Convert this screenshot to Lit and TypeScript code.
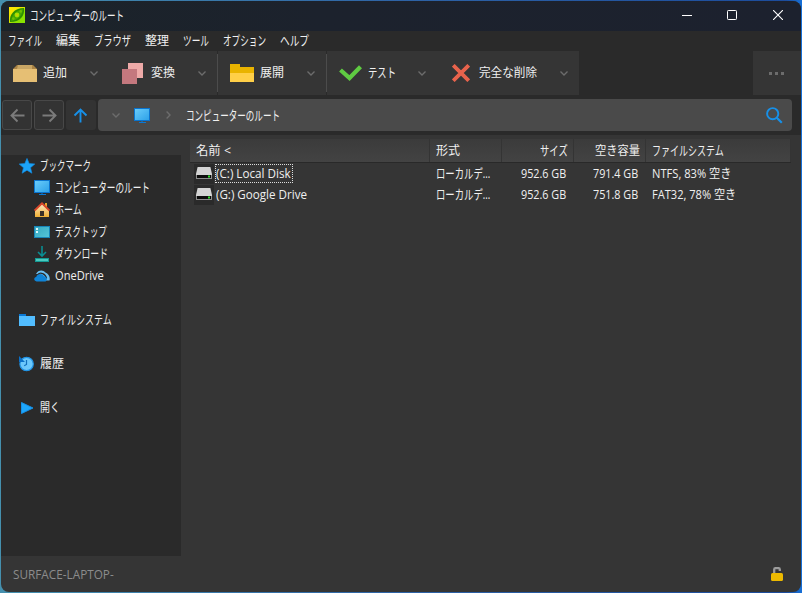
import { LitElement, html, svg, css, nothing } from "lit";
import { customElement, property } from "lit/decorators.js";

/** A label whose glyphs are condensed or widened to occupy exactly `w` pixels. */
@customElement("fit-text")
class FitText extends LitElement {
  static styles = css`
    :host { display: block; flex: none; height: 20px; white-space: pre; text-align: left; }
    .t { display: block; width: max-content; transform-origin: 0 50%; }
    .kana { font-size: 13px; line-height: var(--kana-line, inherit); }
  `;
  @property() text = "";
  @property({ type: Number }) w = 0;

  get kana() {
    return /^[\u3040-\u30ff.]+$/.test(this.text);
  }
  firstUpdated() {
    this.fit();
    document.fonts.ready.then(() => this.fit());
  }
  fit() {
    const span = this.renderRoot.querySelector(".t") as HTMLElement;
    const natural = span.offsetWidth;
    this.style.width = this.w + "px";
    if (natural) span.style.transform = `scaleX(${this.w / natural})`;
  }
  render() {
    return html`<span class="t ${this.kana ? "kana" : ""}">${this.text}</span>`;
  }
}

const icon = (w: number, h: number, body: unknown, crisp = false) => html`
  <svg width=${w} height=${h} viewBox="0 0 ${w} ${h}" fill="none"
    shape-rendering=${crisp ? "crispEdges" : "auto"}>${body}</svg>`;

const logo = icon(16, 16, svg`
  <defs><linearGradient id="lg" x1="0" y1="0" x2="1" y2="1">
    <stop offset="0" stop-color="#ffe600"/><stop offset=".45" stop-color="#e8e800"/><stop offset=".6" stop-color="#8fe000"/><stop offset="1" stop-color="#86e600"/>
  </linearGradient></defs>
  <rect width="16" height="16" fill="url(#lg)"/>
  <path d="M1 15C0 8 5 1 15 1C16 9 11 15 1 15Z" fill="#2f8f00"/>
  <path d="M2 14C3 8 7 3 14 2C13 9 9 13 2 14Z" fill="#46a800"/>
  <circle cx="8" cy="8" r="2.4" fill="#a6e000"/><circle cx="8" cy="8" r="1" fill="#d4cc00"/>
  <circle cx="4.4" cy="11.6" r="1.3" fill="#6cc000"/><circle cx="11.7" cy="4.4" r="1.3" fill="#6cc000"/>`);

const box = icon(24, 17, svg`
  <path d="M4 0H20L24 4V7H0V4Z" fill="#a98345"/><path d="M5 0H19V4H4Z" fill="#c8a564"/>
  <rect y="4" width="24" height="13" fill="#e6bf74"/>`);
const convert = icon(21, 21, svg`
  <rect x="6" width="15" height="15" fill="#eeaaa8"/><rect y="6" width="15" height="15" fill="#c4787e"/>`, true);
const folder = icon(24, 18, svg`
  <path d="M0 0H10V3H24V9H0Z" fill="#e9b300"/><rect y="9" width="24" height="9" fill="#ffcf48"/>`, true);
const check = icon(23, 16, svg`<path d="M1.5 5L10.5 13L21.5 1.8" stroke="#5fcb42" stroke-width="4.2"/>`);
const cross = icon(18, 18, svg`<path d="M1.3 1.3L16.7 16.7M16.7 1.3L1.3 16.7" stroke="#e8634c" stroke-width="3.8"/>`);
const chevron = icon(8, 5, svg`<path d="M.5 .6L4 4L7.5 .6" stroke="#6c6c6c" stroke-width="1.4"/>`);
const chevronRight = icon(5, 8, svg`<path d="M.6 .5L4 4L.6 7.5" stroke="#6c6c6c" stroke-width="1.4"/>`);
const monitor = icon(16, 16, svg`
  <defs><linearGradient id="mg" x1="0" y1="0" x2="1" y2="1">
    <stop offset="0" stop-color="#6bcdfb"/><stop offset="1" stop-color="#2ba0e8"/></linearGradient></defs>
  <rect x=".5" y=".5" width="15" height="12" fill="url(#mg)" stroke="#0a74cf"/>
  <path d="M7.5 13H8.5V14H12V15H5V14H7.5Z" fill="#0a78d4"/>`);
const star = icon(16, 16, svg`<path d="M8 .4L10.2 5.6L15.8 6L11.5 9.7L12.9 15.2L8 12.2L3.1 15.2L4.5 9.7L.2 6L5.8 5.6Z" fill="#1ca4f8" stroke="#128ae0" stroke-width=".7"/>`);
const home = icon(16, 16, svg`
  <defs><linearGradient id="hg" x1="0" y1="0" x2="0" y2="1">
    <stop offset="0" stop-color="#fbe9c4"/><stop offset="1" stop-color="#f0ae32"/></linearGradient></defs>
  <rect x="11" y="1" width="2" height="5" fill="#e9a52c"/>
  <path d="M1 8L8 2L15 8V15H1Z" fill="url(#hg)"/><rect x="6" y="9" width="4" height="5" fill="#3b3027"/>
  <path d="M.5 8.6L8 1.4L15.5 8.6" stroke="#d9472b" stroke-width="2"/>`);
const desktop = icon(16, 12, svg`
  <defs><linearGradient id="dg" x1="0" y1="0" x2="1" y2="1">
    <stop offset="0" stop-color="#36a9c0"/><stop offset="1" stop-color="#55c6d9"/></linearGradient></defs>
  <rect x=".5" y=".5" width="15" height="11" fill="url(#dg)" stroke="#1785b8"/>
  <path d="M2 2H4V4H2ZM2 5H4V7H2Z" fill="#d9f6fb"/>`);
const download = icon(14, 16, svg`
  <path d="M7 0V10M3 6L7 10L11 6" stroke="#0a8d92" stroke-width="1.6"/>
  <rect x=".5" y="12.5" width="13" height="3" fill="#4cc9be" stroke="#159a94"/>`);
const onedrive = icon(16, 12, svg`
  <path d="M2 4C4 0 9 -.6 11.5 2.6C14.5 4 16.5 7 15.5 10.5H12L5 4Z" fill="#6abff2"/>
  <path d="M3.5 4.6C6.5 1.6 11.5 3.6 12.6 8.5" stroke="#2a2a2a" stroke-width="1.2"/>
  <path d="M2.6 11.5C-.6 11 -.4 7.3 2.2 7C3 3.3 8.5 2.8 9.9 6.2C13.6 6.4 13.8 11.5 10.6 11.5Z" fill="#0f83d6"/>`);
const blueFolder = icon(16, 12, svg`<path d="M0 0H7V3H0Z" fill="#0a78d4"/><rect y="2" width="16" height="10" fill="#52bdff"/>`, true);
const history = icon(16, 16, svg`
  <circle cx="7.6" cy="8" r="6.7" fill="#6cc8fb" stroke="#2194e6" stroke-width="1.2"/>
  <path d="M0 0L6 6H0Z" fill="#0a70c8"/><path d="M7.5 4V8.5L5.2 9.8" stroke="#1270bd" stroke-width="1.2"/>`);
const play = icon(13, 12, svg`<path d="M.5 .5L12 6L.5 11.5Z" fill="#1ea6fa" stroke="#1590e6"/>`);
const disk = icon(16, 13, svg`
  <path d="M1.6 0H14.4L16 7V8H0V7Z" fill="#d4d4d4"/><rect y="8" width="16" height="4" fill="#8c8c8c"/>
  <rect x="1" y="8" width="14" height="3" fill="#0c0c0c"/><rect x="12" y="8.5" width="2" height="2" fill="#2fe02f"/>`);
const arrow = (d: string, color: string) =>
  icon(15, 15, svg`<path d=${d} stroke=${color} stroke-width="1.9"/>`);
const search = icon(17, 17, svg`
  <circle cx="6.7" cy="6.7" r="5.6" stroke="#1790e8" stroke-width="1.9"/><path d="M10.8 10.8L15.8 15.8" stroke="#1790e8" stroke-width="2.2"/>`);
const lock = icon(12, 14, svg`
  <path d="M3.2 7V2.5Q3.2 1.2 4.5 1.2H7.5Q8.8 1.2 8.8 2.5V4" stroke="#9c9c9c" stroke-width="2.3"/>
  <rect y="6" width="12" height="8" rx="1.5" fill="#ecb900"/>`);

const menu: [string, number][] = [
  ["ファイル", 34], ["編集", 24], ["ブラウザ", 37], ["整理", 24], ["ツール", 26], ["オプション", 43], ["ヘルプ", 29],
];
const tools = [
  { id: "add", icon: box, text: "追加", w: 24 },
  { id: "conv", icon: convert, text: "変換", w: 24 },
  { id: "ext", icon: folder, text: "展開", w: 24 },
  { id: "test", icon: check, text: "テスト", w: 28 },
  { id: "del", icon: cross, text: "完全な削除", w: 58 },
];
const tree = [
  { icon: star, text: "ブックマーク", w: 51, lvl: 0 },
  { icon: monitor, text: "コンピューターのルート", w: 95, lvl: 1 },
  { icon: home, text: "ホーム", w: 27, lvl: 1 },
  { icon: desktop, text: "デスクトップ", w: 52, lvl: 1 },
  { icon: download, text: "ダウンロード", w: 53, lvl: 1 },
  { icon: onedrive, text: "OneDrive", w: 49, lvl: 1 },
  null,
  { icon: blueFolder, text: "ファイルシステム", w: 72, lvl: 0 },
  null,
  { icon: history, text: "履歴", w: 24, lvl: 0 },
  null,
  { icon: play, text: "開く", w: 20, lvl: 0 },
];
const disks = [
  { name: "(C:) Local Disk", nw: 75, free: "791.4 GB", fs: "NTFS, 83% 空き", fw: 79, focus: true },
  { name: "(G:) Google Drive", nw: 91, free: "751.8 GB", fs: "FAT32, 78% 空き", fw: 84, focus: false },
];
const t = (text: string, w: number) => html`<fit-text .text=${text} .w=${w}></fit-text>`;

@customElement("app-root")
class AppRoot extends LitElement {
  static styles = css`
    :host {
      display: block; box-sizing: border-box; width: 802px; height: 593px; padding: 1px; overflow: hidden;
      background: linear-gradient(90deg, #4590ae 0, #2e63a6 50%, #1c4c9c 98%, #1670d8 100%);
      font: 12px/20px "Open Sans", "Noto Sans CJK JP", sans-serif; color: #f0f0f0;
    }
    * { box-sizing: border-box; }
    svg { display: block; flex: none; }
    .win { height: 591px; border-radius: 8px; overflow: hidden; background: #353535; display: flex; flex-direction: column; }
    .title { height: 30px; flex: none; display: flex; align-items: center; padding: 0 18px 2px 8px; gap: 5px;
      background: linear-gradient(90deg, #1b2329, #1c222d 40%, #1c212e); }
    .caps { margin-left: auto; display: flex; align-items: center; gap: 35px; }
    .caps svg:last-child { margin-left: 1px; }
    .menu { height: 20px; flex: none; background: #2a2a2a; display: flex; gap: 14px; padding-left: 7px; line-height: 19px; }
    .tools, .main { --kana-line: 18px; }
    .tools { height: 44px; flex: none; background: #2a2a2a; display: flex; }
    .tool { display: flex; align-items: center; background: #353535; height: 44px; }
    .tool .ic { display: flex; justify-content: center; width: 24px; }
    .tool .chev { margin-left: auto; }
    .add { width: 109px; padding: 0 12px; gap: 6px; }
    .conv { width: 107px; padding: 0 11px 0 10px; gap: 7px; }
    .ext { width: 109px; padding: 0 11px 0 12px; gap: 6px; border-left: 1px solid #4c4c4c; border-image: linear-gradient(#2a2a2a 4px, #4c4c4c 4px 40px, #2a2a2a 40px) 1; }
    .test { width: 111px; padding: 0 11px; gap: 6px; border-left: 1px solid #4c4c4c; border-image: linear-gradient(#2a2a2a 4px, #4c4c4c 4px 40px, #2a2a2a 40px) 1; }
    .del { width: 142px; padding: 0 11px 0 12px; gap: 6px; }
    .more { margin-left: auto; width: 48px; padding-right: 2px; background: #353535; display: flex; align-items: center; justify-content: center; gap: 3px; }
    .more i { width: 3px; height: 3px; background: #6c6c6c; }
    .nav { height: 40px; flex: none; background: #2a2a2a; display: flex; padding: 4px 9px 4px 1px; }
    .nb { width: 30px; height: 30px; margin: 1px 2px 0 0; border: 1px solid #484848; border-radius: 3px; background: #333;
      display: flex; align-items: center; justify-content: center; }
    .up { border-color: transparent; padding-right: 1px; }
    .addr { flex: 1; background: #4a4a4a; border-radius: 4px; display: flex; align-items: center; padding: 0 9px 0 14px; }
    .addr .mon { margin: 1px 16px 0 14px; }
    .addr .txt { margin-left: 15px; }
    .addr .find { margin-left: auto; }
    .main { flex: 1; display: flex; min-height: 0; }
    .side { width: 180px; height: 401px; margin-top: 20px; background: #2a2a2a; }
    .node { height: 22px; display: flex; align-items: center; gap: 5px; padding-left: 18px; }
    .node .ic { width: 16px; display: flex; justify-content: center; }
    .sub { padding-left: 33px; }
    .list { width: 601px; margin: 4px 0 0 9px; }
    .row { display: grid; grid-template-columns: 240px 72px 72px 72px 1fr; height: 21px; }
    .head { height: 24px; background: linear-gradient(#3b3b3b, #434343); border-bottom: 1px solid #292929; }
    .head .c { border-right: 1px solid #343434; height: 23px; }
    .c { display: flex; align-items: center; padding-left: 6px; min-width: 0; }
    .r { justify-content: flex-end; padding: 0 5px 0 0; }
    .body .r { padding-right: 8px; }
    .name { padding-left: 4px; }
    .dk { width: 20px; height: 20px; background: #2a2a2a; display: flex; align-items: center; justify-content: center; padding-bottom: 1px; }
    .lbl { margin-left: 1px; height: 19px; padding-right: 1px; display: flex; align-items: center; border: 1px solid transparent; }
    .focus { border: 1px dotted #dcdcdc; }
    .status { height: 36px; flex: none; display: flex; align-items: center; justify-content: space-between;
      padding: 1px 18px 0 12px; color: #8c8c8c; }
    .status svg { margin-top: -1px; }
  `;

  render() {
    return html`<div class="win">
      <div class="title">${logo}${t("コンピューターのルート", 94)}
        <div class="caps">
          ${icon(10, 11, svg`<path d="M0 5.5H10" stroke="#fff"/>`)}
          ${icon(10, 10, svg`<rect x=".5" y=".5" width="9" height="9" rx=".8" stroke="#fff"/>`)}
          ${icon(10, 10, svg`<path d="M0 0L10 10M10 0L0 10" stroke="#fff" stroke-width="1.1"/>`)}
        </div>
      </div>
      <div class="menu">${menu.map(([s, w]) => t(s, w))}</div>
      <div class="tools">
        ${tools.map((b) => html`<div class="tool ${b.id}"><span class="ic">${b.icon}</span>${t(b.text, b.w)}<span class="chev">${chevron}</span></div>`)}
        <div class="more"><i></i><i></i><i></i></div>
      </div>
      <div class="nav">
        <div class="nb">${arrow("M14.5 7.5H1.5M7.5 1.5L1.5 7.5L7.5 13.5", "#7b7b7b")}</div>
        <div class="nb">${arrow("M.5 7.5H13.5M7.5 1.5L13.5 7.5L7.5 13.5", "#7b7b7b")}</div>
        <div class="nb up">${arrow("M7.5 14.5V1.5M1.5 7.5L7.5 1.5L13.5 7.5", "#1790e8")}</div>
        <div class="addr">${chevron}<span class="mon">${monitor}</span>${chevronRight}
          <span class="txt">${t("コンピューターのルート", 94)}</span><span class="find">${search}</span></div>
      </div>
      <div class="main">
        <div class="side">
          ${tree.map((n) => html`<div class="node ${n?.lvl ? "sub" : ""}">
            ${n ? html`<span class="ic">${n.icon}</span>${t(n.text, n.w)}` : nothing}</div>`)}
        </div>
        <div class="list">
          <div class="row head">
            <div class="c">${t("名前 <", 35)}</div><div class="c">${t("形式", 24)}</div>
            <div class="c r">${t("サイズ", 28)}</div><div class="c r">${t("空き容量", 45)}</div>
            <div class="c">${t("ファイルシステム", 72)}</div>
          </div>
          <div class="body">
            ${disks.map((d) => html`<div class="row">
              <div class="c name"><span class="dk">${disk}</span><span class="lbl ${d.focus ? "focus" : ""}">${t(d.name, d.nw)}</span></div>
              <div class="c">${t("ローカルデ...", 54)}</div>
              <div class="c r">${t("952.6 GB", 45)}</div><div class="c r">${t(d.free, 45)}</div>
              <div class="c">${t(d.fs, d.fw)}</div>
            </div>`)}
          </div>
        </div>
      </div>
      <div class="status">${t("SURFACE-LAPTOP-", 101)}${lock}</div>
    </div>`;
  }
}
